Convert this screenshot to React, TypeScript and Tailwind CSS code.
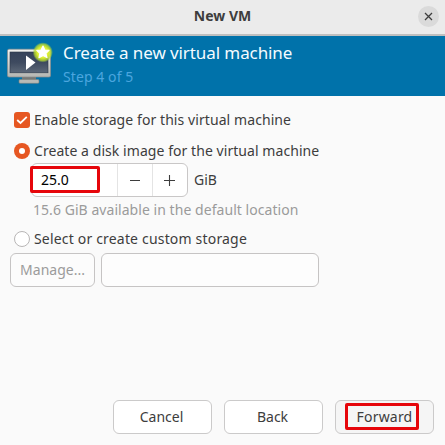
import React from "react";

function MonitorIcon() {
  return (
    <svg width="54" height="48" viewBox="0 0 54 48" className="block shrink-0">
      <defs>
        <linearGradient id="frame" x1="0" y1="0" x2="0" y2="1">
          <stop offset="0" stopColor="#f2f2f0" />
          <stop offset="1" stopColor="#b5b6b2" />
        </linearGradient>
        <linearGradient id="screen" x1="0" y1="0" x2="0" y2="1">
          <stop offset="0" stopColor="#36435a" />
          <stop offset="0.5" stopColor="#3e4a5f" />
          <stop offset="1" stopColor="#5d6878" />
        </linearGradient>
        <radialGradient id="glow">
          <stop offset="0" stopColor="#f6fca0" />
          <stop offset="0.55" stopColor="#dcef2e" />
          <stop offset="0.82" stopColor="#b9da30" stopOpacity="0.75" />
          <stop offset="1" stopColor="#8cc63f" stopOpacity="0" />
        </radialGradient>
      </defs>
      <rect x="22" y="34" width="14" height="5" fill="#777975" />
      <rect x="19" y="37.5" width="20" height="3.8" rx="1" fill="#b9bab6" stroke="#7d7f7b" strokeWidth="0.6" />
      <rect x="7.5" y="7.2" width="43" height="27.8" rx="1.5" fill="url(#frame)" stroke="#8c8e8c" strokeWidth="0.7" />
      <rect x="10" y="10" width="38" height="20.8" fill="url(#screen)" stroke="#2d3849" strokeWidth="0.6" />
      <path d="M26 13.5 L35.5 20.6 L26 28 Z" fill="#fff" />
      <circle cx="42.8" cy="10.4" r="10.2" fill="url(#glow)" />
      <path d="M43 4 L44.8 8 L49 8.4 L45.9 11.3 L47 15.6 L43.1 13.4 L39 15.6 L39.9 11.3 L36.8 8.4 L41.1 8 Z" fill="#fff" stroke="#fff" strokeWidth="1.2" strokeLinejoin="round" />
    </svg>
  );
}

function Radio({ checked }: { checked?: boolean }) {
  return checked ? (
    <span className="flex size-4 shrink-0 items-center justify-center rounded-full bg-[#e65722]">
      <span className="size-1.5 rounded-full bg-white" />
    </span>
  ) : (
    <span className="size-4 shrink-0 rounded-full border border-[#b8b6b6] bg-white" />
  );
}

function Highlight({ className }: { className: string }) {
  return <span className={`pointer-events-none absolute rounded-[2px] border-3 border-[#e6060b] ${className}`} />;
}

export default function App() {
  return (
    <div className="flex h-[445px] w-[445px] flex-col overflow-hidden bg-[#fafafa] font-['Noto_Sans',sans-serif] text-[14px] leading-5 text-[#3d3d3d]">
      <header className="grid h-9 shrink-0 grid-cols-[1fr_auto_1fr] items-center border-b-2 border-[#bfbfbf] bg-[#ebebeb]">
        <h1 className="col-start-2 -mt-[2px] whitespace-nowrap text-[14px] font-bold">New VM</h1>
        <button className="mr-[6px] mt-[-2px] flex size-[21px] items-center justify-center justify-self-end rounded-full bg-[#dadada]">
          <svg width="9" height="9" viewBox="0 0 9 9" stroke="#3d3d3d" strokeWidth="1.3">
            <path d="M1 1 L8 8 M8 1 L1 8" />
          </svg>
        </button>
      </header>

      <section className="flex h-[60px] shrink-0 bg-[#0072aa] pt-[6px]">
        <MonitorIcon />
        <div className="whitespace-nowrap pl-[9px]">
          <p className="text-[17px] leading-[22px] tracking-[-0.09px] text-[#f4fbff]">Create a new virtual machine</p>
          <p className="mt-[3px] text-[14px] leading-5 tracking-[0.08px] text-[#4ba6df]">Step 4 of 5</p>
        </div>
      </section>

      <main className="flex grow flex-col whitespace-nowrap pt-[14px]">
        <label className="flex h-5 items-center gap-1 pl-[14px]">
          <span className="flex size-4 shrink-0 items-center justify-center rounded-[3px] bg-[#e65722]">
            <svg width="12" height="10" viewBox="0 0 12 10" fill="none" stroke="#fff" strokeWidth="1.8">
              <path d="M1.2 5 L4.5 8 L10.8 1.8" />
            </svg>
          </span>
          <span className="tracking-[0.08px]">Enable storage for this virtual machine</span>
        </label>
        <label className="mt-[11px] flex h-5 items-center gap-1 pl-[14px]">
          <Radio checked />
          <span className="tracking-[0.06px]">Create a disk image for the virtual machine</span>
        </label>

        <div className="relative mt-[2px] flex h-[34px] items-center pl-[31px]">
          <div className="flex h-[34px] w-[157px] overflow-hidden rounded-[6px] border border-[#c9c7c7] bg-white">
            <span className="flex w-[85px] items-center pl-[9px] text-black">25.0</span>
            <span className="flex w-[35px] items-center justify-center border-l border-[#e4e4e4]">
              <span className="h-px w-[10px] bg-[#3d3d3d]" />
            </span>
            <span className="flex grow items-center justify-center border-l border-[#e4e4e4] pr-[2px]">
              <svg width="11" height="11" viewBox="0 0 11 11" stroke="#3d3d3d" strokeWidth="1.1">
                <path d="M0 5.5 H11 M5.5 0 V11" />
              </svg>
            </span>
          </div>
          <span className="ml-[6px]">GiB</span>
          <Highlight className="left-[30px] top-[3px] h-[27px] w-[70px]" />
        </div>
        <p className="mt-[3px] pl-[33px] tracking-[0.05px] text-[#9b9b9b]">15.6 GiB available in the default location</p>

        <label className="mt-[9px] flex h-5 items-center gap-1 pl-[14px]">
          <Radio />
          <span className="tracking-[0.18px]">Select or create custom storage</span>
        </label>
        <div className="mt-[4px] flex h-[34px] gap-[6px] pl-[10px]">
          <button className="w-[85px] rounded-[6px] border border-[#c6c4c4] bg-[#fcfcfc] text-[#9b9b9b]">Manage...</button>
          <div className="w-[218px] rounded-[6px] border border-[#c6c4c4] bg-[#fdfdfd]" />
        </div>

        <footer className="mt-auto mb-[11px] flex justify-end gap-3 pr-[11px]">
          <button className="h-[34px] w-[99px] rounded-[6px] border border-[#cbcaca] bg-white pr-[2px]">Cancel</button>
          <button className="h-[34px] w-[99px] rounded-[6px] border border-[#cbcaca] bg-white pr-[2px]">Back</button>
          <button className="relative h-[34px] w-[99px] rounded-[6px] border border-[#cbcaca] bg-[#f5f5f5] tracking-[0.2px]">
            Forward
            <Highlight className="left-[9px] top-[2px] h-[27px] w-[74px]" />
          </button>
        </footer>
      </main>
    </div>
  );
}
